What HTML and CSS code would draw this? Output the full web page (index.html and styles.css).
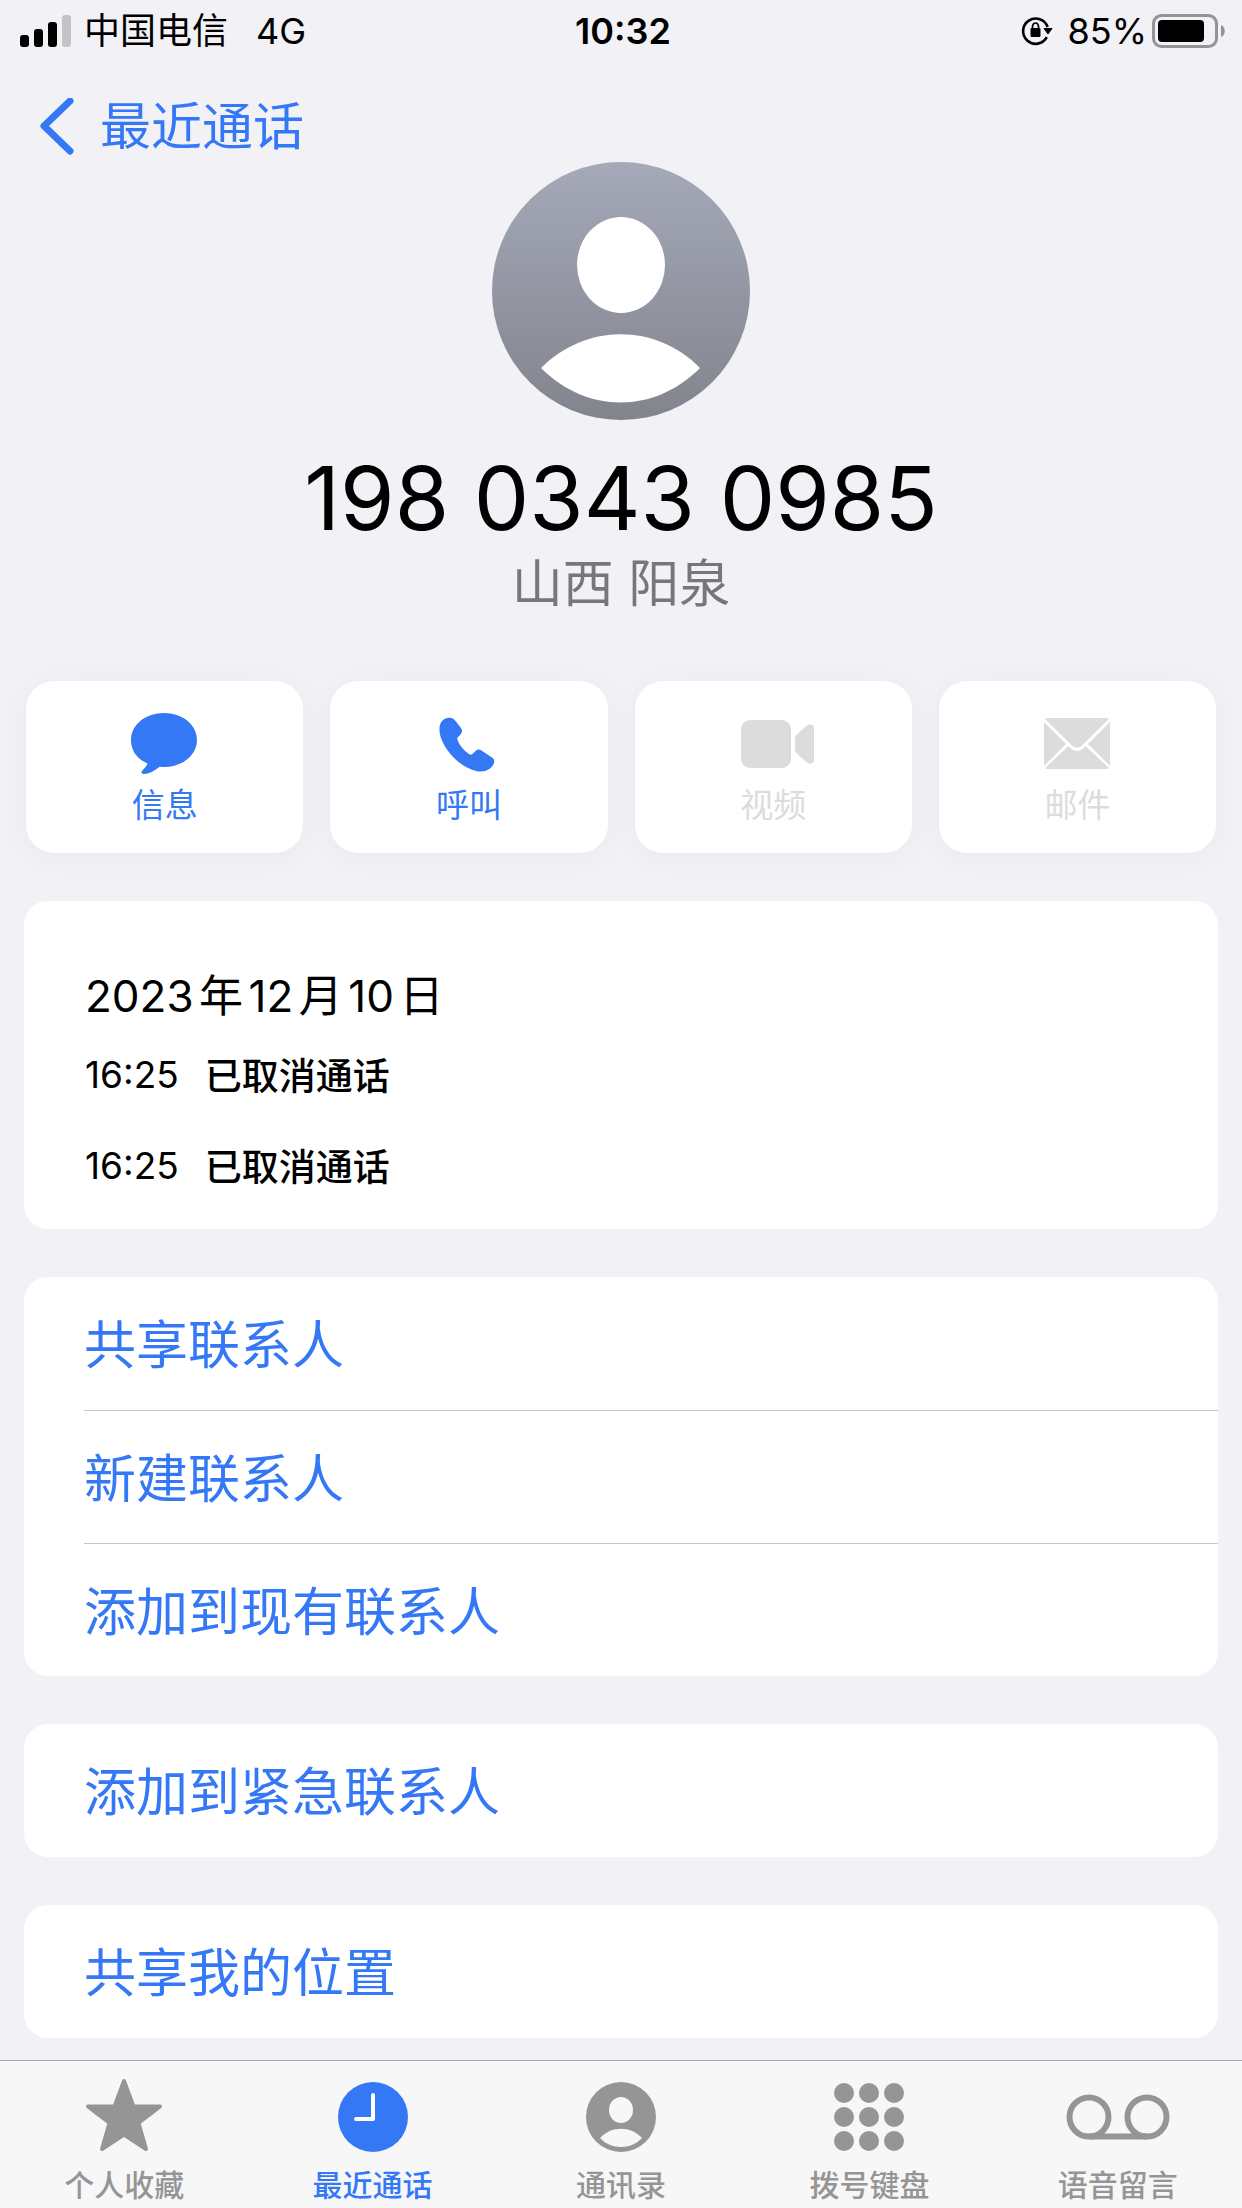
FILE: index.html
```html
<!DOCTYPE html>
<html lang="zh-CN">
<head>
    <meta charset="UTF-8" />
    <meta name="viewport" content="width=device-width, initial-scale=1" />
    <title>最近通话</title>
    <link rel="stylesheet" href="styles.css">
</head>
<body>

    <div class="status-bar">
        <div class="status-left">
            <svg class="signal" viewBox="0 0 52 34" aria-hidden="true">
                <rect x="0" y="21" width="9" height="12" rx="3" />
                <rect x="14" y="15" width="9" height="18" rx="3" />
                <rect x="28" y="8" width="9" height="25" rx="3" />
                <rect class="off" x="42" y="1" width="9" height="32" rx="3" />
            </svg>
            <span class="carrier">中国电信</span>
            <span>4G</span>
        </div>
        <div class="status-time">10:32</div>
        <div class="status-right">
            <svg class="lock" viewBox="0 0 32 32" aria-hidden="true">
                <path d="M25.800 22.200A12.600 12.600 0 1 1 26.600 12" fill="none" stroke="#000" stroke-width="2.600" />
                <path d="M23 13.500h8l-4 5.500z" stroke="#000" stroke-linejoin="round" />
                <path d="M11.500 14.500v-3a3 3.500 0 0 1 6 0v3" fill="none" stroke="#000" stroke-width="1.700" />
                <rect x="9.500" y="13" width="10" height="9" rx="1" />
            </svg>
            <span>85%</span>
            <svg class="battery" viewBox="0 0 74 34" aria-hidden="true">
                <rect x="1.500" y="1.500" width="63" height="31" rx="8" fill="none" stroke="#949398" stroke-width="3" />
                <rect x="6" y="6" width="46" height="22" rx="4" />
                <path d="M69 11c5 1.500 5 10.500 0 12z" fill="#949398" />
            </svg>
        </div>
    </div>

    <nav class="nav">
        <a class="back" href="#recents">
            <svg viewBox="0 0 34 58" aria-hidden="true">
                <path d="M30 3L4 28l26 25" />
            </svg>
            最近通话
        </a>
    </nav>

    <main>
        <header class="contact">
            <svg class="avatar" viewBox="0 0 258 258" aria-hidden="true">
                <defs>
                    <linearGradient id="avatarBg" x1="0" y1="0" x2="0" y2="1">
                        <stop offset="0" stop-color="#a5a9b8" />
                        <stop offset="1" stop-color="#82848d" />
                    </linearGradient>
                </defs>
                <circle cx="129" cy="129" r="129" fill="url(#avatarBg)" />
                <ellipse cx="129" cy="103" rx="44" ry="48" fill="#fff" />
                <path d="M49 206C94 161 164 161 208 206C162 252 95 252 49 206z" fill="#fff" />
            </svg>
            <h1>198 0343 0985</h1>
            <p>山西 阳泉</p>
        </header>

        <div class="actions">
            <button type="button">
                <svg viewBox="0 0 74 62" aria-hidden="true">
                    <path d="M36 0C54.500 0 69 11.800 69 27S54.500 54 36 54c-1.500 0-3-.1-4.400-.3-5.600 4.500-10.600 7-15.600 7.300-2.600.1-3.200-1.800-1.700-3.500 2.500-2.600 4-4 5.200-7C8.300 45.500 3 37 3 27 3 11.800 17.500 0 36 0z" />
                </svg>
                信息
            </button>
            <button type="button">
                <svg viewBox="0 0 74 62" aria-hidden="true">
                    <path d="M15 5c-8 2-9 11-6 20 6 16 20 29 35 33 9 2 16-2 18-8 .6-2 .2-4-2-5.500L49.500 37.500c-2-1.300-4-1.200-6 .5l-3 3c-1.200 1-2.200.8-3.500 0C31.500 37.500 27.500 32 25.500 27c-.6-1.500-.2-2.300.6-3l2.400-2.500c1.800-2 2-4 .5-6.500L23.500 8C21.500 5 19 4 15 5z" />
                </svg>
                呼叫
            </button>
            <button type="button" disabled>
                <svg class="video" viewBox="0 0 74 62" aria-hidden="true">
                    <rect x="5" y="7" width="50" height="48" rx="9" />
                    <path d="M59 26c0-2 .7-3.500 2-4.800L71 12.500c3-2.200 7-.8 7 2v33c0 3-4 4.200-7 2L61 40.800c-1.300-1.200-2-2.800-2-4.800z" />
                </svg>
                视频
            </button>
            <button type="button" disabled>
                <svg viewBox="0 0 74 62" aria-hidden="true">
                    <path d="M8 5h58q2 0 3 1L42 32.500q-5 4.500-10 0L5 6q1-1 3-1z" />
                    <path d="M4 9L26 31 4 53zM70 9v44L48 31z" />
                    <path d="M5 55L28.500 33l2.500 2.500q6 5 12 0l2.500-2.500L69 55q-1 1-3 1H8q-2 0-3-1z" />
                </svg>
                邮件
            </button>
        </div>

        <section class="card history">
            <h2>2023年12月10日</h2>
            <ul>
                <li><time datetime="2023-12-10T16:25">16:25</time><strong>已取消通话</strong></li>
                <li><time datetime="2023-12-10T16:25">16:25</time><strong>已取消通话</strong></li>
            </ul>
        </section>

        <div class="card list">
            <button type="button">共享联系人</button>
            <button type="button">新建联系人</button>
            <button type="button">添加到现有联系人</button>
        </div>

        <div class="card list">
            <button type="button">添加到紧急联系人</button>
        </div>

        <div class="card list">
            <button type="button">共享我的位置</button>
        </div>
    </main>

    <nav class="tab-bar">
        <a href="#favorites">
            <svg viewBox="0 0 104 76" aria-hidden="true">
                <path d="M52 4L61.500 29.500H88L66.500 46 74 72 52 57.500 30 72 37.500 46 16 29.500H42.500z" fill="currentColor" stroke="currentColor" stroke-width="4" stroke-linejoin="round" />
            </svg>
            个人收藏
        </a>
        <a class="active" href="#recents">
            <svg viewBox="0 0 104 76" aria-hidden="true">
                <circle cx="52" cy="40" r="35" fill="currentColor" />
                <path d="M52 18v24H35" fill="none" stroke="#fff" stroke-width="4" stroke-linecap="round" stroke-linejoin="round" />
            </svg>
            最近通话
        </a>
        <a href="#contacts">
            <svg viewBox="0 0 104 76" aria-hidden="true">
                <circle cx="52" cy="40" r="35" fill="currentColor" />
                <ellipse cx="52" cy="33" rx="12" ry="13" fill="#f8f7f7" />
                <path d="M31 61C42 48.500 62 48.500 73 61 62 73 42 73 31 61z" fill="#f8f7f7" />
            </svg>
            通讯录
        </a>
        <a href="#keypad">
            <svg viewBox="0 0 104 76" fill="currentColor" aria-hidden="true">
                <circle cx="27" cy="16" r="10" /><circle cx="52" cy="16" r="10" /><circle cx="77" cy="16" r="10" />
                <circle cx="27" cy="40" r="10" /><circle cx="52" cy="40" r="10" /><circle cx="77" cy="40" r="10" />
                <circle cx="27" cy="64" r="10" /><circle cx="52" cy="64" r="10" /><circle cx="77" cy="64" r="10" />
            </svg>
            拨号键盘
        </a>
        <a href="#voicemail">
            <svg viewBox="0 0 104 76" fill="none" stroke="currentColor" stroke-width="6" aria-hidden="true">
                <circle cx="23" cy="40" r="19.500" />
                <circle cx="81" cy="40" r="19.500" />
                <path d="M23 59.500h58" />
            </svg>
            语音留言
        </a>
    </nav>

</body>
</html>
```
FILE: styles.css
```css
:root {
    --blue: #3478f6;
    --bg: #f1f1f6;
    --gray: #959595;
    --disabled: #dcdcdc;
}

* {
    box-sizing: border-box;
    margin: 0;
    padding: 0;
}

body {
    display: flex;
    flex-direction: column;
    min-height: 100vh;
    background: var(--bg);
    color: #000;
    font-family: Inter, 'Noto Sans CJK SC', sans-serif;
}

svg {
    display: block;
    flex-shrink: 0;
}

a {
    color: inherit;
    text-decoration: none;
}

button {
    border: none;
    background: none;
    color: var(--blue);
    font-family: inherit;
    cursor: pointer;
}

/* status bar */
.status-bar {
    display: grid;
    grid-template-columns: 1fr auto 1fr;
    align-items: center;
    height: 62px;
    padding: 0 16px 0 20px;
    font-size: 36px;
    line-height: 48px;
}

.status-left,
.status-right {
    display: flex;
    align-items: center;
}

.status-right {
    justify-content: flex-end;
}

.signal {
    width: 52px;
    height: 34px;
    margin-right: 12px;
}

    .signal .off {
        fill: #c4c4c8;
    }

.carrier {
    margin-right: 28px;
}

.status-time {
    font-weight: 600;
}

.lock {
    width: 32px;
    height: 32px;
    margin-right: 14px;
}

.battery {
    width: 74px;
    height: 34px;
    margin-left: 5px;
}

/* navigation */
.nav {
    height: 100px;
    padding: 26px 40px 0;
}

.back {
    display: inline-flex;
    align-items: center;
    gap: 26px;
    height: 78px;
    color: var(--blue);
    font-size: 51px;
    line-height: 78px;
}

    .back svg {
        width: 34px;
        height: 58px;
        fill: none;
        stroke: currentColor;
        stroke-width: 7px;
        stroke-linecap: round;
        stroke-linejoin: round;
    }

/* contact */
main {
    padding: 0 24px 22px;
}

.contact {
    display: flex;
    flex-direction: column;
    align-items: center;
}

.avatar {
    width: 258px;
    height: 258px;
}

.contact h1 {
    margin-top: 24px;
    font-size: 88px;
    font-weight: 400;
    line-height: 108px;
}

.contact p {
    color: #77767b;
    font-size: 51px;
    line-height: 64px;
}

.actions {
    display: grid;
    grid-template-columns: repeat(4, 1fr);
    gap: 27px;
    margin-top: 65px;
    padding: 0 2px;
}

    .actions button {
        display: flex;
        flex-direction: column;
        align-items: center;
        height: 172px;
        padding-top: 32px;
        border-radius: 28px;
        background: #fff;
        box-shadow: 0 4px 32px rgba(0, 0, 0, .04);
        font-size: 33px;
        line-height: 48px;
    }

        .actions button:disabled {
            color: var(--disabled);
            cursor: default;
        }

    .actions svg {
        width: 74px;
        height: 62px;
        margin-bottom: 6px;
        fill: currentColor;
        overflow: visible;
    }

/* cards */
.card {
    margin-top: 48px;
    border-radius: 24px;
    background: #fff;
    overflow: hidden;
}

.history {
    padding: 62px 61px 30px;
}

    .history h2 {
        font-size: 44px;
        font-weight: 400;
        line-height: 66px;
        text-autospace: normal;
    }

    .history ul {
        list-style: none;
    }

    .history li {
        display: flex;
        align-items: center;
        gap: 26px;
        height: 68px;
        margin-top: 11px;
        font-size: 37px;
    }

        .history li + li {
            margin-top: 23px;
        }

    .history strong {
        font-weight: 500;
    }

.list {
    padding-left: 60px;
}

    .list button {
        display: block;
        width: 100%;
        height: 133px;
        padding-bottom: 4px;
        font-size: 52px;
        text-align: left;
    }

        .list button + button {
            border-top: 1px solid #c6c6c8;
        }

/* tabs */
.tab-bar {
    position: sticky;
    bottom: 0;
    display: grid;
    grid-template-columns: repeat(5, 1fr);
    height: 148px;
    margin-top: auto;
    padding-top: 16px;
    border-top: 1px solid #a5a5aa;
    background: #f8f7f8;
    color: var(--gray);
    font-size: 30px;
    font-weight: 500;
    line-height: 44px;
}

    .tab-bar a {
        display: flex;
        flex-direction: column;
        align-items: center;
    }

    .tab-bar .active {
        color: var(--blue);
    }

    .tab-bar svg {
        width: 104px;
        height: 76px;
        margin-bottom: 10px;
    }
```
